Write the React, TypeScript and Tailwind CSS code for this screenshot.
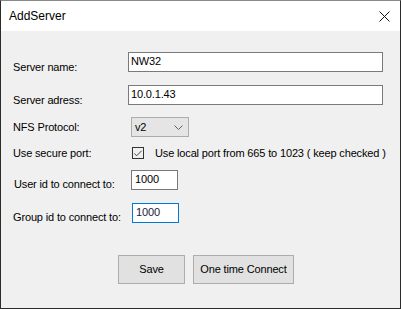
import React from 'react';

const labelCls = 'w-[127px] shrink-0 pl-[12px] whitespace-nowrap text-[11px] leading-[14px] tracking-[-0.15px] text-black';
const txt = 'text-[11px] tracking-[-0.15px] text-black';

function CheckIcon() {
  return (
    <svg width="11" height="11" viewBox="0 0 11 11" fill="none">
      <path d="M1.5 5.5 L4 8 L9.5 2.5" stroke="#333" strokeWidth="1" />
    </svg>
  );
}

function Chevron() {
  return (
    <svg width="9" height="5" viewBox="0 0 9 5" fill="none">
      <path d="M0.5 0.5 L4.5 4.5 L8.5 0.5" stroke="#606060" strokeWidth="1" />
    </svg>
  );
}

export default function App() {
  return (
    <div
      className="w-[401px] h-[309px] flex flex-col bg-[#f0f0f0] border-x border-b border-t border-x-[#2b2b2b] border-b-[#2b2b2b] border-t-[#8a8a8a] overflow-hidden"
      style={{ fontFamily: '"Liberation Sans", Arial, sans-serif' }}
    >
      {/* title bar */}
      <div className="h-[30px] shrink-0 bg-white flex items-center justify-between pl-[8px] pr-[10px]">
        <span className="text-[12px] text-black">AddServer</span>
        <svg width="11" height="11" viewBox="0 0 11 11" fill="none">
          <path d="M0.5 0.5 L10.5 10.5 M10.5 0.5 L0.5 10.5" stroke="#111" strokeWidth="1" />
        </svg>
      </div>

      {/* form */}
      <div className="flex flex-col pt-[21px]">
        <div className="flex items-start h-[20px]">
          <span className={`${labelCls} pt-[8px]`}>Server name:</span>
          <div className={`w-[255px] h-[20px] bg-white border border-[#7a7a7a] pl-[2px] leading-[17px] ${txt}`}>
            NW32
          </div>
        </div>

        <div className="flex items-start h-[20px] mt-[13px]">
          <span className={`${labelCls} pt-[8px]`}>Server adress:</span>
          <div className={`w-[255px] h-[20px] bg-white border border-[#7a7a7a] pl-[2px] leading-[17px] ${txt}`}>
            10.0.1.43
          </div>
        </div>

        <div className="flex items-start h-[20px] mt-[12px]">
          <span className={`${labelCls} pt-[3px]`}>NFS Protocol:</span>
          <div className={`ml-[3px] w-[58px] h-[20px] bg-[#e5e5e5] border border-[#adadad] flex items-center justify-between pl-[3px] pr-[5px] ${txt}`}>
            <span>v2</span>
            <Chevron />
          </div>
        </div>

        <div className="flex items-center h-[14px] mt-[9px]">
          <span className={labelCls}>Use secure port:</span>
          <div className="ml-[4px] w-[12px] h-[12px] border border-[#333] bg-[#f0f0f0] flex items-center justify-center">
            <CheckIcon />
          </div>
          <span className={`ml-[11px] ${txt}`}>Use local port from 665 to 1023 ( keep checked )</span>
        </div>

        <div className="flex items-start h-[20px] mt-[10px]">
          <span className={`${labelCls} pt-[7px] pl-[13px]`}>User id to connect to:</span>
          <div className={`ml-[3px] w-[47px] h-[20px] bg-white border border-[#7a7a7a] pl-[3px] leading-[17px] ${txt}`}>
            1000
          </div>
        </div>

        <div className="flex items-start h-[20px] mt-[13px]">
          <span className={`${labelCls} pt-[7px]`}>Group id to connect to:</span>
          <div className="ml-[4px] w-[47px] h-[20px] bg-white border border-[#0078d7] pl-[3px] leading-[17px] text-[11px] tracking-[-0.15px] text-[#1a1a40]">
            1000
          </div>
        </div>

        <div className="flex gap-[8px] mt-[32px] pl-[117px]">
          <button className={`w-[67px] h-[29px] bg-[#e1e1e1] border border-[#adadad] ${txt}`}>Save</button>
          <button className={`w-[101px] h-[29px] bg-[#e1e1e1] border border-[#adadad] ${txt}`}>
            One time Connect
          </button>
        </div>
      </div>
    </div>
  );
}
